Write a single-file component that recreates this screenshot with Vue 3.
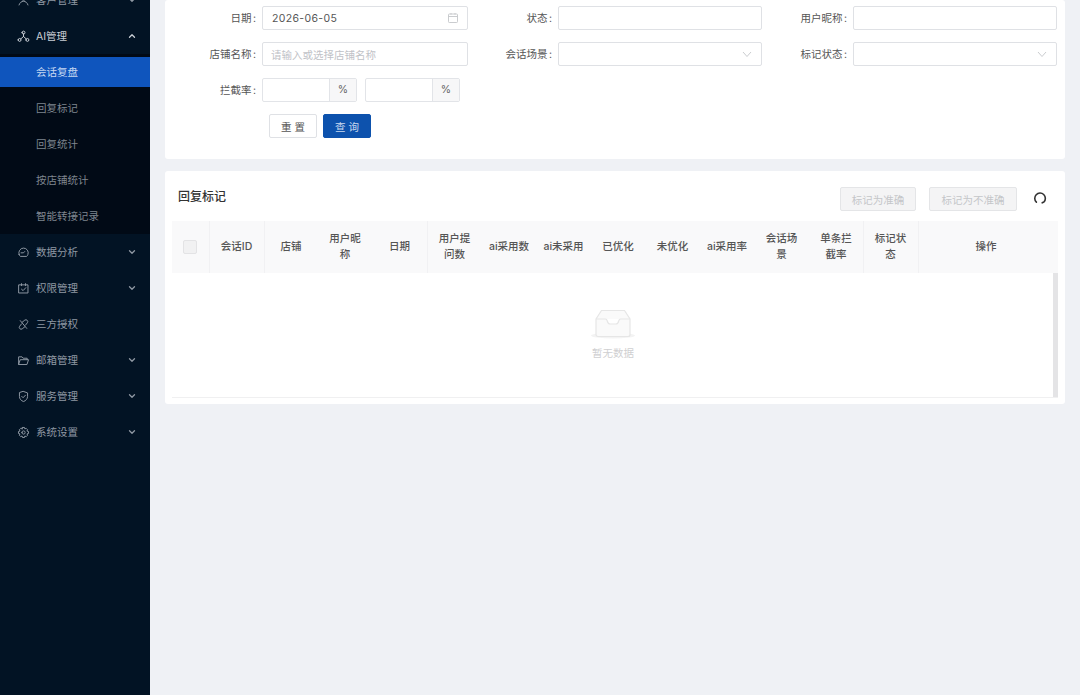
<template>
  <div class="layout">
    <aside class="sidebar">
      <nav class="menu">
        <template v-for="item in menu" :key="item.name">
          <div class="menu-item" :class="{ open: item.children }">
            <svg class="menu-icon" viewBox="0 0 16 16" fill="none" stroke="currentColor" stroke-width="1.2" stroke-linecap="round" stroke-linejoin="round">
              <path v-for="(d, i) in icons[item.icon]" :key="i" :d="d" />
            </svg>
            <span class="menu-name">{{ item.name }}</span>
            <svg v-if="item.arrow" class="menu-arrow" viewBox="0 0 10 10" fill="none" stroke="currentColor" stroke-width="1.3" stroke-linecap="round" stroke-linejoin="round">
              <path :d="item.children ? 'M2.5 6.2L5 3.8L7.5 6.2' : 'M2.5 3.8L5 6.2L7.5 3.8'" />
            </svg>
          </div>
          <div v-if="item.children" class="submenu">
            <div v-for="(sub, i) in item.children" :key="sub" class="submenu-row">
              <div class="submenu-item" :class="{ active: i === 0 }">{{ sub }}</div>
            </div>
          </div>
        </template>
      </nav>
    </aside>

    <main class="main">
      <section class="card search-card">
        <div class="form-grid">
          <div class="field">
            <label>日期 :</label>
            <div class="input has-icon">
              <span class="value">2026-06-05</span>
              <svg class="suffix" viewBox="0 0 12 12" fill="none" stroke="currentColor" stroke-width="0.9">
                <rect x="1.5" y="2" width="9" height="8.5" rx="0.8" />
                <path d="M1.5 4.5H10.5M4 1V2.6M8 1V2.6" />
              </svg>
            </div>
          </div>
          <div class="field">
            <label>状态 :</label>
            <div class="input"></div>
          </div>
          <div class="field">
            <label>用户昵称 :</label>
            <div class="input"></div>
          </div>

          <div class="field">
            <label>店铺名称 :</label>
            <div class="input"><span class="placeholder">请输入或选择店铺名称</span></div>
          </div>
          <div class="field">
            <label>会话场景 :</label>
            <div class="input has-icon">
              <svg class="suffix" viewBox="0 0 12 12" fill="none" stroke="currentColor" stroke-width="0.9"><path d="M2 4L6 8.5L10 4" /></svg>
            </div>
          </div>
          <div class="field">
            <label>标记状态 :</label>
            <div class="input has-icon">
              <svg class="suffix" viewBox="0 0 12 12" fill="none" stroke="currentColor" stroke-width="0.9"><path d="M2 4L6 8.5L10 4" /></svg>
            </div>
          </div>

          <div class="field">
            <label>拦截率 :</label>
            <div class="range">
              <div class="addon-input"><div class="addon-box"></div><span class="addon">%</span></div>
              <div class="addon-input"><div class="addon-box"></div><span class="addon">%</span></div>
            </div>
          </div>
        </div>
        <div class="search-actions">
          <button class="btn">重 置</button>
          <button class="btn primary">查 询</button>
        </div>
      </section>

      <section class="card table-card">
        <div class="table-head">
          <h3>回复标记</h3>
          <div class="table-actions">
            <button class="btn disabled first">标记为准确</button>
            <button class="btn disabled">标记为不准确</button>
            <svg class="refresh" viewBox="0 0 14 14" fill="none" stroke="currentColor" stroke-width="1.6" stroke-linecap="round" stroke-linejoin="round">
              <path d="M3.4 11.2A5.3 5.3 0 1 1 10.9 11L9.2 11.8" />
            </svg>
          </div>
        </div>

        <div class="table-wrap">
          <table class="data-table">
            <colgroup>
              <col style="width: 37px" />
              <col v-for="c in columns" :key="c.title" :style="{ width: c.width + 'px' }" />
            </colgroup>
            <thead>
              <tr>
                <th class="line"><span class="checkbox"></span></th>
                <th v-for="c in columns" :key="c.title" :class="{ line: c.line, last: c.title === '操作' }">
                  <div class="th-text" :class="{ narrow: c.wrap }">{{ c.title }}</div>
                </th>
              </tr>
            </thead>
          </table>
          <div class="empty-body">
            <div class="empty">
              <svg class="empty-icon" viewBox="0 0 48 32" fill="none">
                <ellipse cx="24" cy="27.5" rx="22" ry="3" fill="#f3f3f3" />
                <path d="M7 11L12.5 2.5H35.5L41 11V26.5C41 27.6 40.1 28.5 39 28.5H9C7.9 28.5 7 27.6 7 26.5Z" fill="#fafafa" stroke="#e6e6e6" stroke-width="1.2" />
                <path d="M7 11H16.5C17.6 11 18 12 18.3 13C18.8 15 19.8 16 21 16H27C28.2 16 29.2 15 29.7 13C30 12 30.4 11 31.5 11H41" fill="#fff" stroke="#e6e6e6" stroke-width="1.2" />
              </svg>
              <p>暂无数据</p>
            </div>
            <div class="scroll-thumb"></div>
          </div>
        </div>
      </section>
    </main>
  </div>
</template>

<script setup>
const icons = {
  user: ['M8 2.5a2.6 2.6 0 1 1 0 5.2a2.6 2.6 0 1 1 0-5.2Z', 'M2.5 13.5C3.5 10.5 5.5 9 8 9s4.5 1.5 5.5 4.5'],
  nodes: ['M8 4.6V8M8 8L4.6 11M8 8L11.4 11', 'M6.2 3.2a1.8 1.8 0 1 0 3.6 0a1.8 1.8 0 1 0-3.6 0Z', 'M1.4 12.2a1.8 1.8 0 1 0 3.6 0a1.8 1.8 0 1 0-3.6 0Z', 'M11 12.2a1.8 1.8 0 1 0 3.6 0a1.8 1.8 0 1 0-3.6 0Z'],
  gauge: ['M2.6 10.5A5.8 5.8 0 1 1 13.4 10.5C13 11.6 12.4 12.5 11.8 12.8H4.2C3.6 12.5 3 11.6 2.6 10.5Z', 'M5 8.4H8L9.5 6.8'],
  calendar: ['M2.5 3.5H13.5V13.5H2.5Z', 'M5.5 2V4.5M10.5 2V4.5', 'M5.5 8.8L7.5 10.6L10.8 7'],
  link: ['M6.4 5.2L9.6 2.6a2.3 2.3 0 0 1 3.2 3.2L10.4 8.8', 'M9.6 10.8L6.4 13.4a2.3 2.3 0 0 1-3.2-3.2L5.6 7.2', 'M4 3.2L12 12.8'],
  folder: ['M2 12.5V3.5H6.2L7.6 5.2H12.5V7', 'M2 12.5L4 7H14.2L12.4 12.5Z'],
  shield: ['M8 1.8L13 3.6V8C13 11 10.8 13.2 8 14.2C5.2 13.2 3 11 3 8V3.6Z', 'M5.8 7.8L7.5 9.5L10.4 6.4'],
  gear: ['M6.8 1.8H9.2L9.7 3.6L11.3 2.9L13 4.6L12.2 6.2L14.2 6.8V9.2L12.3 9.8L13 11.4L11.3 13.1L9.7 12.3L9.2 14.2H6.8L6.2 12.3L4.6 13.1L2.9 11.4L3.7 9.8L1.8 9.2V6.8L3.7 6.2L2.9 4.6L4.6 2.9L6.2 3.6Z', 'M6 8a2 2 0 1 0 4 0a2 2 0 1 0-4 0Z'],
}

const menu = [
  { name: '客户管理', icon: 'user', arrow: true },
  { name: 'AI管理', icon: 'nodes', arrow: true, children: ['会话复盘', '回复标记', '回复统计', '按店铺统计', '智能转接记录'] },
  { name: '数据分析', icon: 'gauge', arrow: true },
  { name: '权限管理', icon: 'calendar', arrow: true },
  { name: '三方授权', icon: 'link', arrow: false },
  { name: '邮箱管理', icon: 'folder', arrow: true },
  { name: '服务管理', icon: 'shield', arrow: true },
  { name: '系统设置', icon: 'gear', arrow: true },
]

const columns = [
  { title: '会话ID', width: 55, line: true },
  { title: '店铺', width: 54 },
  { title: '用户昵称', width: 54, wrap: true },
  { title: '日期', width: 55, line: true },
  { title: '用户提问数', width: 55, wrap: true },
  { title: 'ai采用数', width: 54 },
  { title: 'ai未采用', width: 55 },
  { title: '已优化', width: 54 },
  { title: '未优化', width: 55 },
  { title: 'ai采用率', width: 54 },
  { title: '会话场景', width: 55, wrap: true },
  { title: '单条拦截率', width: 54, wrap: true, line: true },
  { title: '标记状态', width: 55, wrap: true, line: true },
  { title: '操作', width: 140 },
]
</script>

<style>
html,
body {
  margin: 0;
  background: #eff1f5;
}
</style>

<style scoped>
.layout {
  display: flex;
  height: 695px;
  overflow: hidden;
  font-family: 'Inter', 'Noto Sans CJK SC', sans-serif;
  font-size: 10.5px;
  color: #555;
}

.sidebar {
  flex: 0 0 150px;
  background: #021324;
  overflow: hidden;
}

.menu {
  margin-top: -18px;
}

.menu-item {
  height: 36px;
  display: flex;
  align-items: center;
  padding: 0 13px 0 17px;
  color: #8f98a3;
}

.menu-item.open {
  color: #c9ced5;
}

.menu-icon {
  width: 13px;
  height: 13px;
  flex-shrink: 0;
  margin-right: 6px;
}

.menu-name {
  flex: 1;
  line-height: 30px;
  padding-top: 1px;
}

.menu-arrow {
  width: 10px;
  height: 10px;
}

.submenu {
  background: #010a16;
}

.submenu-row {
  height: 36px;
  display: flex;
  align-items: center;
}

.submenu-item {
  flex: 1;
  height: 30px;
  line-height: 31px;
  padding-left: 36px;
  color: #7f868f;
}

.submenu-item.active {
  background: #0f55bd;
  color: #c6d8f2;
}

.main {
  flex: 1;
  min-width: 0;
  padding: 0 15px;
}

.card {
  background: #fff;
  border-radius: 3px;
}

.search-card {
  padding: 6px 8px 21px 7px;
}

.form-grid {
  display: grid;
  grid-template-columns: 296px 294px 295px;
  row-gap: 12px;
}

.field {
  display: flex;
  align-items: center;
  height: 24px;
}

.field label {
  flex: 0 0 84px;
  margin-right: 6px;
  padding-bottom: 2px;
  text-align: right;
  word-spacing: -1.5px;
  color: #555;
}

.field:nth-child(3n) label {
  flex-basis: 85px;
}

.input {
  flex: 1;
  height: 24px;
  box-sizing: border-box;
  border: 1px solid #dfe1e5;
  border-radius: 2px;
  display: flex;
  align-items: center;
  padding: 0 8px 0 9px;
}

.has-icon {
  justify-content: flex-end;
}

.value {
  flex: 1;
  font-size: 10.5px;
  letter-spacing: 0.35px;
  color: #555;
}

.placeholder {
  margin-left: -1px;
  color: #bfc2c7;
}

.suffix {
  width: 12px;
  height: 12px;
  color: #c4c6ca;
}

.range {
  display: flex;
  gap: 8px;
}

.addon-input {
  display: flex;
  width: 95px;
  height: 24px;
  box-sizing: border-box;
  border: 1px solid #e2e4e8;
  border-radius: 2px;
}

.addon-box {
  flex: 1;
}

.addon {
  width: 26px;
  text-align: center;
  line-height: 22px;
  background: #f7f7f8;
  border-left: 1px solid #e2e4e8;
  color: #666;
}

.search-actions {
  display: flex;
  gap: 6px;
  padding: 12px 0 0 97px;
}

.btn {
  height: 24px;
  width: 48px;
  padding: 0;
  box-sizing: border-box;
  border: 1px solid #dfe1e5;
  border-radius: 2px;
  background: #fff;
  font: inherit;
  color: #555;
}

.btn.primary {
  background: #0d52ad;
  border-color: #0d52ad;
  color: #c9daf0;
}

.table-card {
  margin-top: 12px;
  padding: 0 7px 6px;
  height: 233px;
  box-sizing: border-box;
}

.table-head {
  height: 50px;
  display: flex;
  align-items: center;
  justify-content: space-between;
  padding-left: 6px;
}

.table-head h3 {
  margin: 0 0 2px;
  font-size: 12px;
  font-weight: 500;
  color: #333;
}

.table-actions {
  display: flex;
  align-items: center;
  padding-top: 6px;
}

.btn.disabled {
  height: 24px;
  width: 88px;
  background: #f4f4f5;
  border-color: #e4e5e7;
  color: #c4c6c9;
}

.btn.disabled.first {
  width: 76px;
  margin-right: 13px;
}

.refresh {
  width: 14px;
  height: 14px;
  margin: -3px 11px 0 16px;
  color: #333;
}

.table-wrap {
  border-bottom: 1px solid #f0f0f1;
}

.data-table {
  width: 886px;
  table-layout: fixed;
  border-collapse: collapse;
}

.data-table th {
  height: 52px;
  padding: 0;
  background: #f9f9fa;
  font-weight: 500;
  color: #555;
  text-align: center;
  border-right: 1px solid transparent;
}

.data-table th.line {
  border-right-color: #f1f1f3;
}

.data-table th.last {
  padding-right: 4px;
}

.th-text {
  line-height: 16px;
  margin: 0 auto;
}

.th-text.narrow {
  width: 32px;
}

.checkbox {
  display: inline-block;
  width: 12px;
  height: 12px;
  vertical-align: middle;
  background: #f1f1f2;
  border: 1px solid #e3e3e5;
  border-radius: 2px;
}

.empty-body {
  position: relative;
  height: 124px;
  display: flex;
  justify-content: center;
}

.empty {
  width: 100%;
  padding: 35px 4px 0 0;
  text-align: center;
}

.empty-icon {
  display: block;
  width: 48px;
  height: 32px;
  margin: 0 auto;
}

.empty p {
  margin: 5px 0 0;
  font-size: 10.5px;
  color: #cfcfd1;
}

.scroll-thumb {
  position: absolute;
  top: 0;
  right: 0;
  bottom: 0;
  width: 5px;
  background: #e4e4e6;
}
</style>
